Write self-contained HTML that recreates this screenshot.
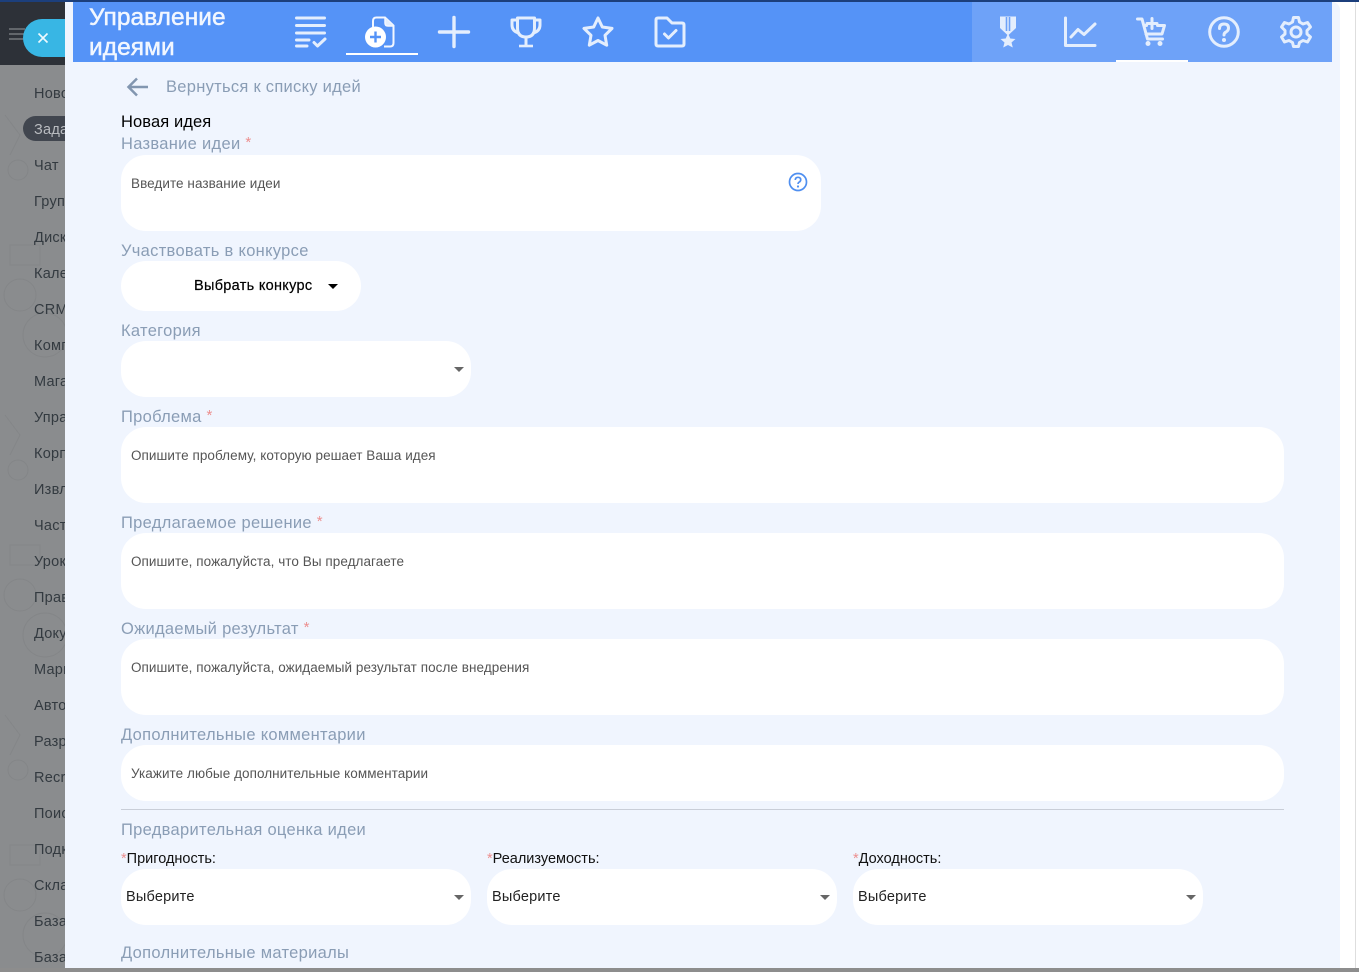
<!DOCTYPE html>
<html lang="ru">
<head>
<meta charset="utf-8">
<title>Управление идеями</title>
<style>
html,body{margin:0;padding:0;width:1359px;height:972px;overflow:hidden;background:#fff;font-family:"Liberation Sans","DejaVu Sans",sans-serif}
*{box-sizing:border-box}
.abs,.t,.box,.lb,.ph,.side{position:absolute}
.t,.lb,.ph,.side{white-space:nowrap;line-height:20px}
.side{left:34px;font-size:14.5px;color:#333a40;letter-spacing:.25px}
.lb{left:121px;font-size:16.5px;color:#8a9db5;letter-spacing:.3px}
.lb i{font-style:normal;color:#ec8f8f;font-size:15px;position:relative;top:-2px}
.box{background:#fff;border-radius:25px}
.ph{font-size:13.5px;color:#555;letter-spacing:.06px}
.arrow{position:absolute;width:0;height:0;border-left:5px solid transparent;border-right:5px solid transparent;border-top:5px solid #666}
.req{position:absolute;font-size:14.5px;color:#111;line-height:18px;white-space:nowrap}
.req b{font-weight:400;color:#ec8f8f}
.sel{position:absolute;font-size:14.5px;color:#222;line-height:20px;letter-spacing:.2px}
svg{position:absolute;overflow:visible}
.ic{fill:none;stroke:#e4eefd;stroke-width:3;stroke-linecap:round;stroke-linejoin:round}
</style>
</head>
<body>
<!-- page backdrop -->
<div class="abs" style="left:0;top:0;width:1359px;height:972px;background:#fff"></div>
<div class="abs" style="left:1355px;top:0;width:1px;height:972px;background:#dedede"></div>
<div class="abs" style="left:0;top:0;width:65px;height:968px;background:#8a8c8e"></div>
<div class="abs" style="left:0;top:2px;width:65px;height:63px;background:#2d3138"></div>
<div class="abs" style="left:0;top:0;width:1359px;height:2px;background:#1c3f7c"></div>
<div class="abs" style="left:0;top:968px;width:1359px;height:4px;background:#8d8d8d"></div>

<!-- faint wallpaper doodles behind the sidebar -->
<svg style="left:0;top:65px" width="65" height="903" viewBox="0 0 65 903" fill="none" stroke="#848688" stroke-width="1">
<circle cx="18" cy="105" r="10"/><path d="M5 50L20 70L10 90"/><circle cx="20" cy="230" r="16"/><path d="M10 180H40V200H10Z"/><circle cx="45" cy="270" r="22"/>
<circle cx="18" cy="405" r="10"/><path d="M5 350L20 370L10 390"/><circle cx="20" cy="530" r="16"/><path d="M10 480H40V500H10Z"/><circle cx="45" cy="570" r="22"/>
<circle cx="18" cy="705" r="10"/><path d="M5 650L20 670L10 690"/><circle cx="20" cy="830" r="16"/><path d="M10 780H40V800H10Z"/><circle cx="45" cy="870" r="22"/>
</svg>

<!-- faint hamburger and close button -->
<div class="abs" style="left:9px;top:28px;width:16px;height:2px;background:#62666b"></div>
<div class="abs" style="left:9px;top:33px;width:16px;height:2px;background:#62666b"></div>
<div class="abs" style="left:9px;top:38px;width:16px;height:2px;background:#62666b"></div>
<div class="abs" style="left:23px;top:19px;width:50px;height:38px;border-radius:19px 0 0 19px;background:#38b6e4"></div>
<svg style="left:37px;top:32px" width="12" height="12" viewBox="0 0 12 12"><path d="M1.500 1.500L10.500 10.500M10.500 1.500L1.500 10.500" stroke="#eef9fe" stroke-width="1.600" fill="none"/></svg>

<!-- sidebar -->
<div class="abs" style="left:23px;top:116px;width:50px;height:25px;border-radius:12.5px 0 0 12.5px;background:#41464f"></div>
<div class="side" style="top:84px">Новости</div>
<div class="side" style="top:120px;color:#b9bcc0">Задачи</div>
<div class="side" style="top:156px">Чат</div>
<div class="side" style="top:192px">Группы</div>
<div class="side" style="top:228px">Диск</div>
<div class="side" style="top:264px">Календарь</div>
<div class="side" style="top:300px">CRM</div>
<div class="side" style="top:336px">Компания</div>
<div class="side" style="top:372px">Магазин</div>
<div class="side" style="top:408px">Управление</div>
<div class="side" style="top:444px">Корпоративная</div>
<div class="side" style="top:480px">Извлечение</div>
<div class="side" style="top:516px">Частые</div>
<div class="side" style="top:552px">Уроки</div>
<div class="side" style="top:588px">Правила</div>
<div class="side" style="top:624px">Документы</div>
<div class="side" style="top:660px">Маршруты</div>
<div class="side" style="top:696px">Автоматизация</div>
<div class="side" style="top:732px">Разработка</div>
<div class="side" style="top:768px">Recruit</div>
<div class="side" style="top:804px">Поиск</div>
<div class="side" style="top:840px">Подкасты</div>
<div class="side" style="top:876px">Склад</div>
<div class="side" style="top:912px">База</div>
<div class="side" style="top:948px">База</div>

<!-- main panel -->
<div class="abs" style="left:65px;top:2px;width:1275px;height:966px;background:#f0f5fe;border-radius:0 8px 0 0;overflow:hidden"></div>

<!-- header -->
<div class="abs" style="left:73px;top:2px;width:899px;height:60px;background:#5593f7"></div>
<div class="abs" style="left:972px;top:2px;width:360px;height:60px;background:#6ea2f8"></div>
<div class="t" style="left:89px;top:3px;width:180px;color:#f2f7ff;font-size:24.5px;line-height:30px;white-space:normal;-webkit-text-stroke:.5px #f2f7ff;letter-spacing:.05px">Управление идеями</div>
<div class="abs" style="left:346px;top:53px;width:72px;height:2px;background:#fff"></div>
<div class="abs" style="left:1116px;top:60px;width:72px;height:2px;background:#fff"></div>

<!-- list icon -->
<svg style="left:295px;top:16px" width="32" height="32" viewBox="0 0 32 32"><path class="ic" d="M1.500 2H29.500M1.500 9.500H29.500M1.500 17H29.500M1.500 24H14M1.500 30H12" stroke-width="3"/><path class="ic" d="M19 26.500L22.500 30L30 23" stroke-width="2.600"/></svg>
<!-- new document icon -->
<svg style="left:364px;top:16px" width="32" height="32" viewBox="0 0 32 32"><path d="M9 11V5Q9 1.500 12.500 1.500H21L29.500 9.500V27Q29.500 30.500 26 30.500H20" fill="none" stroke="#f3f7ff" stroke-width="2"/><path d="M21 1.500V7Q21 10 24 10H29.500" fill="#e4eefd" stroke="#f3f7ff" stroke-width="1.500"/><circle cx="11.500" cy="21" r="10.500" fill="#fff"/><path d="M11.500 15.500V26.500M6 21H17" stroke="#5593f7" stroke-width="2.400"/></svg>
<!-- plus icon -->
<svg style="left:438px;top:16px" width="32" height="32" viewBox="0 0 32 32"><path d="M16 1.500V30.500M1.500 16H30.500" stroke="#e4eefd" stroke-width="3.400" stroke-linecap="round" fill="none"/></svg>
<!-- trophy icon -->
<svg style="left:510px;top:16px" width="32" height="32" viewBox="0 0 32 32"><path class="ic" d="M7.500 2H24.500V12Q24.500 21 16 21Q7.500 21 7.500 12Z" stroke-width="2.400"/><path class="ic" d="M7.500 4H2V9Q2 15 8.500 17M24.500 4H30V9Q30 15 23.500 17M16 21V29.500" stroke-width="2.200"/><path d="M9 30H23" stroke="#e4eefd" stroke-width="2.600" fill="none"/></svg>
<!-- star icon -->
<svg style="left:582px;top:16px" width="32" height="32" viewBox="0 0 32 32"><path class="ic" d="M16 2L20.300 11L30 12.400L23 19.300L24.700 29.200L16 24.500L7.300 29.200L9 19.300L2 12.400L11.700 11Z" stroke-width="3.200"/></svg>
<!-- folder check icon -->
<svg style="left:654px;top:16px" width="32" height="32" viewBox="0 0 32 32"><path class="ic" d="M2 4Q2 2 4 2H13L18 7H28Q30 7 30 9V28Q30 30 28 30H4Q2 30 2 28Z"/><path class="ic" d="M10.500 18L14.500 22L22 14.500" stroke-width="2.800"/></svg>
<!-- medal icon -->
<svg style="left:992px;top:16px" width="32" height="32" viewBox="0 0 32 32"><path d="M8 0.500H24V12L16 19.500L8 12Z" fill="#e4eefd"/><path d="M14.500 1V15" stroke="#6ea2f8" stroke-width="1.600"/><path d="M17.500 1V15" stroke="#6ea2f8" stroke-width="1.600"/><path d="M16 17.500L18.300 22.500L23.500 23L19.500 26.500L20.800 31.500L16 29L11.200 31.500L12.500 26.500L8.500 23L13.700 22.500Z" fill="#e4eefd"/></svg>
<!-- chart icon -->
<svg style="left:1064px;top:16px" width="32" height="32" viewBox="0 0 32 32"><path class="ic" d="M1.500 2V29.500H31" stroke-width="2.600"/><path class="ic" d="M7 21L14 13.500L20 18.500L31 8" stroke-width="2.400"/></svg>
<!-- cart icon -->
<svg style="left:1136px;top:16px" width="32" height="32" viewBox="0 0 32 32"><path class="ic" d="M1.500 3H6L11.500 23H26.500" stroke-width="2.300"/><path class="ic" d="M8 9.500H10.500M21.500 9.500H28.500L26 18H10" stroke-width="2.300"/><path class="ic" d="M11 7.500H21M16 2.500V12.500" stroke-width="2.300"/><circle cx="12" cy="27.500" r="2.500" fill="#e4eefd"/><circle cx="24" cy="27.500" r="2.500" fill="#e4eefd"/></svg>
<!-- help icon -->
<svg style="left:1208px;top:16px" width="32" height="32" viewBox="0 0 32 32"><circle class="ic" cx="16" cy="16" r="14.300" stroke-width="2.500"/><path class="ic" d="M11.500 12.500Q11.500 8 16 8Q20.500 8 20.500 12Q20.500 14.500 18 16Q16 17 16 19" stroke-width="2.800"/><circle cx="16" cy="24" r="2" fill="#e4eefd"/></svg>
<!-- gear icon -->
<svg style="left:1280px;top:16px" width="32" height="32" viewBox="0 0 32 32"><path class="ic" d="M13.500 1.500H18.500L19.500 6L23 8L27.500 6.500L30.500 11L27 14.500V18L30.500 21L27.500 26L23 24.500L19.500 26.500L18.500 30.500H13.500L12.500 26.500L9 24.500L4.500 26L1.500 21L5 18V14.500L1.500 11L4.500 6.500L9 8L12.500 6Z" stroke-width="2"/><circle class="ic" cx="16" cy="16" r="5" stroke-width="2.200"/></svg>

<!-- back link -->
<svg style="left:126px;top:76px" width="24" height="22" viewBox="0 0 24 22"><path d="M22 11H2.500M11 2.500L2.500 11L11 19.500" fill="none" stroke="#8296b0" stroke-width="2.500"/></svg>
<div class="t" style="left:166px;top:77px;font-size:16.5px;color:#8a9db5;letter-spacing:.28px">Вернуться к списку идей</div>
<div class="t" style="left:121px;top:112px;font-size:16.5px;color:#000;letter-spacing:.1px">Новая идея</div>

<!-- Название -->
<div class="lb" style="top:134px">Название идеи <i>*</i></div>
<div class="box" style="left:121px;top:155px;width:700px;height:76px"></div>
<div class="ph" style="left:131px;top:174px">Введите название идеи</div>
<svg style="left:788px;top:172px" width="20" height="20" viewBox="0 0 20 20"><circle cx="10" cy="10" r="8.500" fill="none" stroke="#4f8ff0" stroke-width="1.700"/><path d="M7.300 8Q7.300 5.300 10 5.300Q12.700 5.300 12.700 7.700Q12.700 9.200 11 10.200Q10 10.800 10 12" fill="none" stroke="#4f8ff0" stroke-width="1.700"/><circle cx="10" cy="14.500" r="1.100" fill="#4f8ff0"/></svg>

<!-- Конкурс -->
<div class="lb" style="top:241px">Участвовать в конкурсе</div>
<div class="box" style="left:121px;top:261px;width:240px;height:50px"></div>
<div class="t" style="left:194px;top:276px;font-size:14.5px;color:#000;letter-spacing:.3px;-webkit-text-stroke:.2px #000">Выбрать конкурс</div>
<div class="arrow" style="left:328px;top:284px;border-top-color:#000"></div>

<!-- Категория -->
<div class="lb" style="top:321px">Категория</div>
<div class="box" style="left:121px;top:341px;width:350px;height:56px"></div>
<div class="arrow" style="left:454px;top:367px"></div>

<!-- Проблема -->
<div class="lb" style="top:407px">Проблема <i>*</i></div>
<div class="box" style="left:121px;top:427px;width:1163px;height:76px"></div>
<div class="ph" style="left:131px;top:446px">Опишите проблему, которую решает Ваша идея</div>

<!-- Решение -->
<div class="lb" style="top:513px">Предлагаемое решение <i>*</i></div>
<div class="box" style="left:121px;top:533px;width:1163px;height:76px"></div>
<div class="ph" style="left:131px;top:552px">Опишите, пожалуйста, что Вы предлагаете</div>

<!-- Результат -->
<div class="lb" style="top:619px">Ожидаемый результат <i>*</i></div>
<div class="box" style="left:121px;top:639px;width:1163px;height:76px"></div>
<div class="ph" style="left:131px;top:658px">Опишите, пожалуйста, ожидаемый результат после внедрения</div>

<!-- Комментарии -->
<div class="lb" style="top:725px">Дополнительные комментарии</div>
<div class="box" style="left:121px;top:745px;width:1163px;height:56px"></div>
<div class="ph" style="left:131px;top:764px">Укажите любые дополнительные комментарии</div>

<div class="abs" style="left:121px;top:809px;width:1163px;height:1px;background:#c9ced8"></div>

<!-- Оценка -->
<div class="lb" style="top:820px">Предварительная оценка идеи</div>

<div class="req" style="left:121px;top:850px"><b>*</b>Пригодность:</div>
<div class="box" style="left:121px;top:869px;width:350px;height:56px"></div>
<div class="sel" style="left:126px;top:887px">Выберите</div>
<div class="arrow" style="left:454px;top:895px"></div>

<div class="req" style="left:487px;top:850px"><b>*</b>Реализуемость:</div>
<div class="box" style="left:487px;top:869px;width:350px;height:56px"></div>
<div class="sel" style="left:492px;top:887px">Выберите</div>
<div class="arrow" style="left:820px;top:895px"></div>

<div class="req" style="left:853px;top:850px"><b>*</b>Доходность:</div>
<div class="box" style="left:853px;top:869px;width:350px;height:56px"></div>
<div class="sel" style="left:858px;top:887px">Выберите</div>
<div class="arrow" style="left:1186px;top:895px"></div>

<div class="lb" style="top:943px">Дополнительные материалы</div>
</body>
</html>
